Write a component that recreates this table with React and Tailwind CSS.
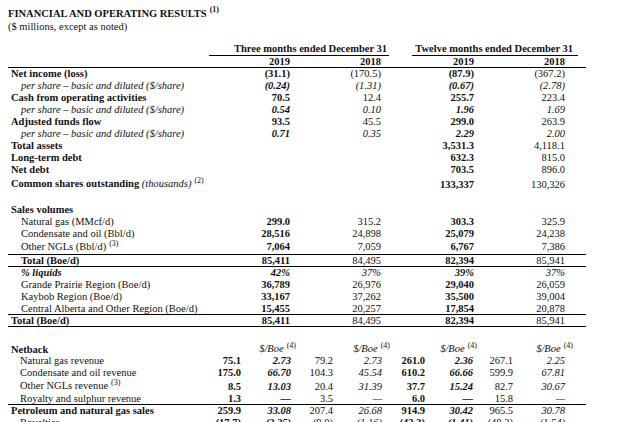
import React from "react";

const GRID = "grid grid-cols-[197px_40px_49px_43px_53px_39px_48px_43px_58px]";
const TS = ["col-span-2 pr-[4px]", "col-span-2 pr-[9px]", "col-span-2 pr-[3px]", "col-span-2 pr-[13px]"];
const NB = ["pr-[4px]", "pr-[3px]", "pr-[4px]", "pr-[8px]", "pr-[4px]", "pr-[4px]", "pr-[7px]", "pr-[13px]"];

function Sup({ children, bold }) {
  return (
    <span className={`relative -top-[4px] ml-[3px] text-[8px] not-italic ${bold ? "font-bold" : "font-normal"}`}>
      {children}
    </span>
  );
}

function TopRow({ label, sup, supText, indent, italic, vals = [], h = "h-[12px]", extra = "", labelBold = true, labelItalic, allBold }) {
  return (
    <div className={`${GRID} ${h} items-center ${extra}`}>
      <div className={`${indent ? "pl-[13px]" : "pl-[3px]"} ${labelBold ? "font-bold" : ""} ${labelItalic ? "italic" : ""} whitespace-nowrap`}>
        {label}
        {supText && <span className="italic font-normal"> {supText}</span>}
        {sup && <Sup>{sup}</Sup>}
      </div>
      {vals.map((v, i) => (
        <div
          key={i}
          className={`${TS[i]} text-right whitespace-nowrap ${allBold || i % 2 === 0 ? "font-bold" : "font-normal"} ${italic ? "italic" : ""}`}
        >
          {v}
        </div>
      ))}
    </div>
  );
}

function NbRow({ label, sup, indent, vals = [], h = "h-[12px]", extra = "", labelBold }) {
  const w = ["font-bold", "font-bold italic", "font-normal", "italic", "font-bold", "font-bold italic", "font-normal", "italic"];
  return (
    <div className={`${GRID} ${h} items-center ${extra}`}>
      <div className={`${indent ? "pl-[12px]" : "pl-[3px]"} ${labelBold ? "font-bold" : ""} whitespace-nowrap`}>
        {label}
        {sup && <Sup>{sup}</Sup>}
      </div>
      {vals.map((v, i) => (
        <div key={i} className={`${NB[i]} text-right whitespace-nowrap ${w[i]}`}>
          {v}
        </div>
      ))}
    </div>
  );
}

export default function App() {
  return (
    <div className="w-[640px] h-[422px] overflow-hidden bg-white text-[#111] text-[10.5px] leading-[12px] font-['Liberation_Serif',serif]">
      <div className="pl-[8px] w-[586px]">
        {/* Title */}
        <div className="pt-[8px] font-bold h-[20px] flex items-center">
          <span>FINANCIAL AND OPERATING RESULTS</span>
          <Sup bold>(1)</Sup>
        </div>
        <div className="h-[13px] flex items-center">($ millions, except as noted)</div>

        {/* Group headers */}
        <div className={`${GRID} h-[23px] items-end`}>
          <div />
          <div className="col-span-4 ml-[4px] mr-[1px] h-[14px] border-b border-black flex items-center justify-end pr-[2px] font-bold whitespace-nowrap">
            Three months ended December 31
          </div>
          <div className="col-span-4 ml-[22px] h-[14px] border-b border-black flex items-center justify-end pr-[5px] font-bold whitespace-nowrap">
            Twelve months ended December 31
          </div>
        </div>
        <TopRow label="" allBold vals={["2019", "2018", "2019", "2018"]} extra="border-b border-black" h="h-[12px]" />
        <TopRow label="Net income (loss)" vals={["(31.1)", "(170.5)", "(87.9)", "(367.2)"]} />
        <TopRow label="per share – basic and diluted ($/share)" indent italic labelBold={false} labelItalic vals={["(0.24)", "(1.31)", "(0.67)", "(2.78)"]} />
        <TopRow label="Cash from operating activities" vals={["70.5", "12.4", "255.7", "223.4"]} />
        <TopRow label="per share – basic and diluted ($/share)" indent italic labelBold={false} labelItalic vals={["0.54", "0.10", "1.96", "1.69"]} />
        <TopRow label="Adjusted funds flow" vals={["93.5", "45.5", "299.0", "263.9"]} />
        <TopRow label="per share – basic and diluted ($/share)" indent italic labelBold={false} labelItalic vals={["0.71", "0.35", "2.29", "2.00"]} />
        <TopRow label="Total assets" vals={["", "", "3,531.3", "4,118.1"]} />
        <TopRow label="Long-term debt" vals={["", "", "632.3", "815.0"]} />
        <TopRow label="Net debt" vals={["", "", "703.5", "896.0"]} />
        <TopRow label="Common shares outstanding" supText="(thousands)" sup="(2)" h="h-[15px]" extra="items-end" vals={["", "", "133,337", "130,326"]} />

        <div className="h-[13px]" />

        {/* Sales volumes */}
        <TopRow label="Sales volumes" vals={[]} />
        <TopRow label="Natural gas (MMcf/d)" indent labelBold={false} vals={["299.0", "315.2", "303.3", "325.9"]} />
        <TopRow label="Condensate and oil (Bbl/d)" indent labelBold={false} vals={["28,516", "24,898", "25,079", "24,238"]} />
        <TopRow label="Other NGLs (Bbl/d)" sup="(3)" indent labelBold={false} h="h-[15px]" extra="border-b border-black" vals={["7,064", "7,059", "6,767", "7,386"]} />
        <TopRow label="Total (Boe/d)" indent vals={["85,411", "84,495", "82,394", "85,941"]} extra="border-b border-black" />
        <TopRow label="% liquids" indent italic labelItalic vals={["42%", "37%", "39%", "37%"]} />
        <TopRow label="Grande Prairie Region (Boe/d)" indent labelBold={false} vals={["36,789", "26,976", "29,040", "26,059"]} />
        <TopRow label="Kaybob Region (Boe/d)" indent labelBold={false} vals={["33,167", "37,262", "35,500", "39,004"]} />
        <TopRow label="Central Alberta and Other Region (Boe/d)" indent labelBold={false} extra="border-b border-black" vals={["15,455", "20,257", "17,854", "20,878"]} />
        <TopRow label="Total (Boe/d)" vals={["85,411", "84,495", "82,394", "85,941"]} extra="border-b border-black" />

        <div className="h-[16px]" />

        {/* Netback */}
        <div className={`${GRID} h-[12px] items-center`}>
          <div className="pl-[3px] font-bold">Netback</div>
          {[0, 1, 2, 3].map((k) => (
            <React.Fragment key={k}>
              <div />
              <div className={`${["-mr-[2px]", "pr-[0px]", "pr-[0px]", "pr-[5px]"][k]} text-right italic whitespace-nowrap`}>
                $/Boe<Sup>(4)</Sup>
              </div>
            </React.Fragment>
          ))}
        </div>
        <NbRow label="Natural gas revenue" indent vals={["75.1", "2.73", "79.2", "2.73", "261.0", "2.36", "267.1", "2.25"]} />
        <NbRow label="Condensate and oil revenue" indent vals={["175.0", "66.70", "104.3", "45.54", "610.2", "66.66", "599.9", "67.81"]} />
        <NbRow label="Other NGLs revenue" sup="(3)" indent h="h-[14px]" extra="items-end" vals={["8.5", "13.03", "20.4", "31.39", "37.7", "15.24", "82.7", "30.67"]} />
        <NbRow label="Royalty and sulphur revenue" indent extra="border-b border-black" vals={["1.3", "—", "3.5", "—", "6.0", "—", "15.8", "—"]} />
        <NbRow label="Petroleum and natural gas sales" labelBold vals={["259.9", "33.08", "207.4", "26.68", "914.9", "30.42", "965.5", "30.78"]} />
        <NbRow label="Royalties" indent vals={["(17.7)", "(2.25)", "(9.0)", "(1.16)", "(42.3)", "(1.41)", "(48.3)", "(1.54)"]} />
      </div>
    </div>
  );
}
